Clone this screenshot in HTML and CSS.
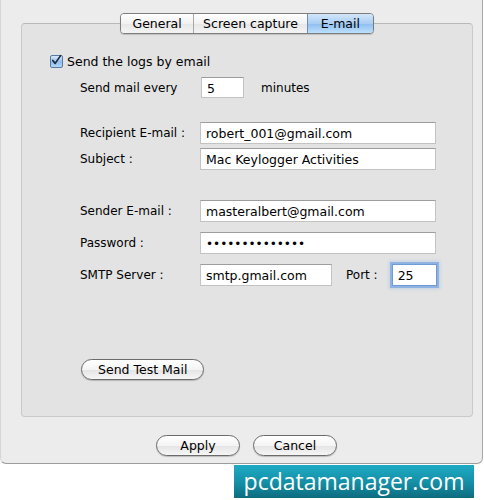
FILE: index.html
```html
<!DOCTYPE html>
<html lang="en">
<head>
    <meta charset="UTF-8">
    <meta name="viewport" content="width=device-width, initial-scale=1.0">
    <title>Preferences</title>
    <link rel="stylesheet" href="styles.css">
</head>
<body>
    <div class="window">
        <div class="group">
            <div class="tabs">
                <div class="tab">General</div>
                <div class="tab">Screen capture</div>
                <div class="tab selected">E-mail</div>
            </div>

            <div class="check-row">
                <span class="checkbox">
                    <svg width="13" height="13" viewBox="0 0 13 13">
                        <path d="M3 6.5 L5.6 9.6 L11.5 1.2" fill="none" stroke="#1b2a3d" stroke-width="1.8" stroke-linecap="round" stroke-linejoin="round"/>
                    </svg>
                </span>
                <span>Send the logs by email</span>
            </div>

            <div class="every-row">
                <span class="every-label">Send mail every</span>
                <input class="field minutes" type="text" value="5">
                <span class="unit">minutes</span>
            </div>

            <!-- message -->
            <div class="field-row first">
                <label>Recipient E-mail :</label>
                <input class="field wide" type="text" value="robert_001@gmail.com">
            </div>
            <div class="field-row close">
                <label>Subject :</label>
                <input class="field wide" type="text" value="Mac Keylogger Activities">
            </div>

            <!-- account -->
            <div class="field-row section">
                <label>Sender E-mail :</label>
                <input class="field wide" type="text" value="masteralbert@gmail.com">
            </div>
            <div class="field-row">
                <label>Password :</label>
                <input class="field wide secret" type="password" value="secretpass1234">
            </div>
            <div class="field-row">
                <label>SMTP Server :</label>
                <input class="field server" type="text" value="smtp.gmail.com">
                <span class="port-label">Port :</span>
                <input class="field port" type="text" value="25">
            </div>

            <div class="test-row">
                <button class="pill test">Send Test Mail</button>
            </div>
        </div>

        <div class="actions">
            <button class="pill">Apply</button>
            <button class="pill">Cancel</button>
        </div>
    </div>

    <div class="brand">pcdatamanager.com</div>
</body>
</html>
```

FILE: styles.css
```css
body {
    margin: 0;
    background: #fff;
    font-family: "DejaVu Sans", Verdana, sans-serif;
    font-size: 12px;
    color: #000;
}

.window {
    width: 483px;
    height: 464px;
    box-sizing: border-box;
    background: #ececec;
    border-left: 1px solid #d6d6d6;
    border-right: 1px solid #a8a8a8;
    border-bottom: 1px solid #9c9c9c;
    border-radius: 0 0 6px 6px;
    padding-top: 23px;
}

.group {
    margin-left: 20px;
    width: 452px;
    height: 394px;
    box-sizing: border-box;
    background: #e3e3e3;
    border: 1px solid #c9c9c9;
    border-top-color: #b9b9b9;
    border-radius: 4px;
}

/* segmented tabs sitting on the group border */
.tabs {
    display: flex;
    width: max-content;
    margin: -11px auto 0;
    border: 1px solid #7d7d7d;
    border-radius: 4px;
    overflow: hidden;
    box-shadow: 0 1px 1px rgba(0, 0, 0, 0.15);
}

.tab {
    height: 19px;
    line-height: 19px;
    font-size: 12.5px;
    padding: 0 9px;
    text-align: center;
    background: linear-gradient(#ffffff, #f1f1f1 50%, #e6e6e6 51%, #f4f4f4);
    border-left: 1px solid #a9a9a9;
}

.tab:first-child {
    border-left: none;
    width: 72px;
    padding: 0;
}

.tab.selected {
    width: 65px;
    padding: 0;
    background: linear-gradient(#d3e6fa, #a9cdf3 50%, #8dbdf0 51%, #bde0fb);
    border-left-color: #6c8fb8;
}

.check-row {
    display: flex;
    align-items: center;
    gap: 4px;
    height: 14px;
    margin: 20px 0 0 28px;
    font-size: 12.5px;
}

.checkbox {
    width: 13px;
    height: 13px;
    box-sizing: border-box;
    border: 1px solid #5879a3;
    border-radius: 2px;
    background: linear-gradient(#d8e9fb, #8fbdea 55%, #b4d8f7);
    display: flex;
}

.checkbox svg {
    margin: -2px 0 0 -1px;
}

.every-row {
    display: flex;
    align-items: center;
    margin: 9px 0 0 58px;
}

.every-label {
    width: 121px;
}

.unit {
    margin-left: 17px;
}

.field {
    box-sizing: border-box;
    height: 22px;
    margin: 0;
    padding: 1px 5px 0;
    font-family: inherit;
    font-size: 12.5px;
    color: #000;
    background: #fff;
    border: 1px solid #c3c3c3;
    border-top-color: #9d9d9d;
    border-radius: 0;
    outline: none;
}

.field.minutes {
    width: 43px;
    height: 21px;
}

.field.wide {
    width: 236px;
}

.field.server {
    width: 132px;
}

.field.port {
    width: 45px;
    border-color: #6e9bd3;
    box-shadow: 0 0 0 2px rgba(120, 165, 225, 0.7), 0 0 3px 3px rgba(120, 165, 225, 0.3);
}

.field.secret {
    font-size: 12px;
}

.field-row {
    display: flex;
    align-items: center;
    margin: 10px 0 0 58px;
}

.field-row label {
    width: 120px;
}

.field-row.first {
    margin-top: 24px;
}

.field-row.close {
    margin-top: 4px;
}

.field-row.section {
    margin-top: 30px;
}

.port-label {
    margin: 0 14px 0 14px;
}

/* aqua pill buttons */
.pill {
    height: 21px;
    padding: 0 16px;
    font-family: inherit;
    font-size: 12.5px;
    color: #000;
    border: 1px solid #6b6b6b;
    border-radius: 11px;
    background: linear-gradient(#ffffff, #f4f4f4 50%, #e4e4e4 51%, #f6f6f6);
    box-shadow: 0 1px 1px rgba(0, 0, 0, 0.2);
}

.test-row {
    margin: 73px 0 0 59px;
}

.actions {
    display: flex;
    justify-content: center;
    gap: 13px;
    margin-top: 18px;
    padding-left: 10px;
}

.actions .pill {
    width: 84px;
}

.brand {
    margin-left: 234px;
    width: 240px;
    height: 33px;
    margin-top: 1px;
    background: linear-gradient(#1eabc4, #148ea5 55%, #0d6c7d);
    color: #fff;
    font-family: "Open Sans", sans-serif;
    font-size: 23px;
    line-height: 33px;
    text-align: center;
}
```
